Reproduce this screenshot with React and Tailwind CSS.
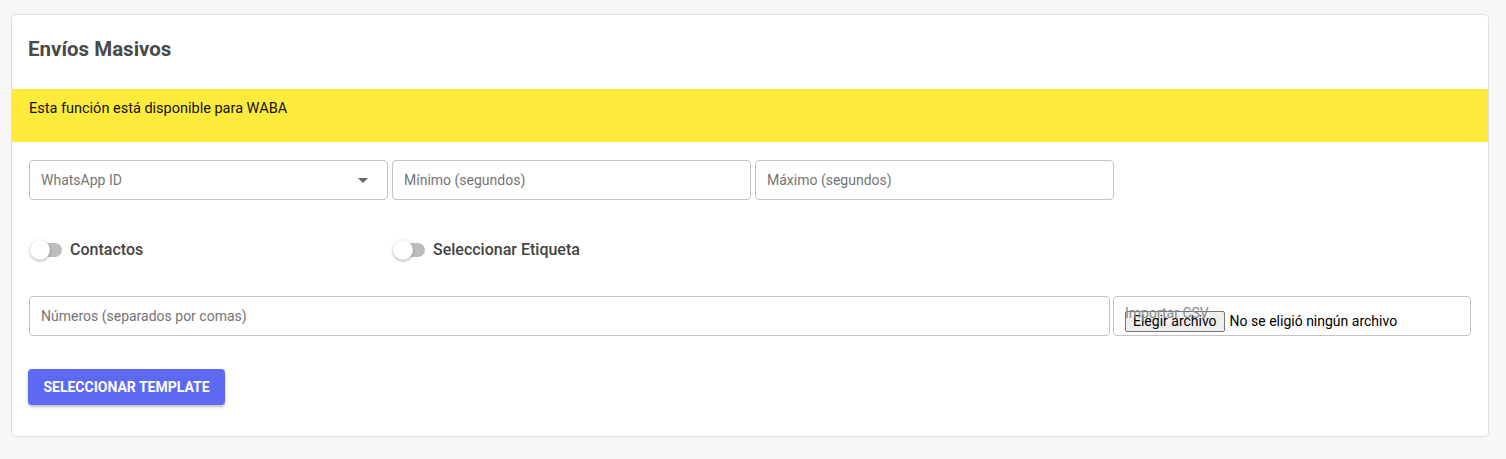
const fieldBox =
  "h-10 w-full rounded border border-[#c4c4c4] bg-white pl-[11px] pr-3 flex items-center text-[14px] text-[#757575]";

const Toggle = ({ label }) => (
  <div className="flex items-center gap-2">
    <div className="relative w-[32px] h-[20px] flex items-center">
      <div className="h-[14px] w-[31px] ml-[1px] rounded-full bg-[#bdbdbd]" />
      <div className="absolute left-0 top-0 h-[20px] w-[20px] rounded-full bg-white shadow-[0_1px_3px_rgba(0,0,0,0.35)]" />
    </div>
    <span className="text-[16px] font-medium text-[#444]">{label}</span>
  </div>
);

const App = () => {
  return (
    <div
      className="min-h-screen bg-[#f7f7f7] pt-[14px] pl-[11px]"
      style={{ fontFamily: "Roboto, 'Liberation Sans', sans-serif" }}
    >
      <div className="w-[1478px] rounded border border-[#e0e0e0] bg-white overflow-hidden">
        {/* Header */}
        <div className="h-[74px] px-[16px] pt-[19px]">
          <h1 className="text-[20.5px] font-bold text-[#4a4a4a]">Envíos Masivos</h1>
        </div>

        {/* Notice */}
        <div className="h-[53px] bg-[#ffeb3b] px-[17px] pt-[9px] text-[14.5px] text-[#111]">
          Esta función está disponible para WABA
        </div>

        <div className="px-[17px] pt-[18px] pb-[31px]">
          {/* Timing row */}
          <div className="grid grid-cols-[359px_359px_359px_1fr] gap-x-[4px]">
            <div className={`${fieldBox} justify-between`}>
              <span>WhatsApp ID</span>
              <svg width="10" height="5" viewBox="0 0 10 5" className="mr-[7px]">
                <path d="M0 0h10L5 5z" fill="#666" />
              </svg>
            </div>
            <div className={fieldBox}>Mínimo (segundos)</div>
            <div className={fieldBox}>Máximo (segundos)</div>
          </div>

          {/* Toggles */}
          <div className="grid grid-cols-[359px_359px_359px_1fr] gap-x-[4px] mt-[30px] h-[40px] items-center">
            <div className="pl-[1px]">
              <Toggle label="Contactos" />
            </div>
            <div className="pl-[1px]">
              <Toggle label="Seleccionar Etiqueta" />
            </div>
          </div>

          {/* Numbers + CSV */}
          <div className="grid grid-cols-[1081px_1fr] gap-x-[3px] mt-[26px]">
            <div className={fieldBox}>Números (separados por comas)</div>
            <div className="relative h-10 rounded border border-[#c4c4c4] bg-white pl-[11px]">
              <div className="flex items-center gap-[5px] pt-[14px] text-[14px] text-black">
                <span className="h-[21px] px-[7px] flex items-center rounded-[2px] border border-[#767676] bg-[#efefef]">
                  Elegir archivo
                </span>
                <span>No se eligió ningún archivo</span>
              </div>
              <span className="absolute left-[11px] top-[6px] text-[14px] text-[#8a8a8a]">
                Importar CSV
              </span>
            </div>
          </div>

          <button className="mt-[33px] h-[36px] w-[197px] -ml-[1px] rounded bg-[#5d68f3] text-[14px] font-bold uppercase text-white shadow-[0_2px_3px_rgba(0,0,0,0.25)]">
            Seleccionar Template
          </button>
        </div>
      </div>
    </div>
  );
};

export default App;
